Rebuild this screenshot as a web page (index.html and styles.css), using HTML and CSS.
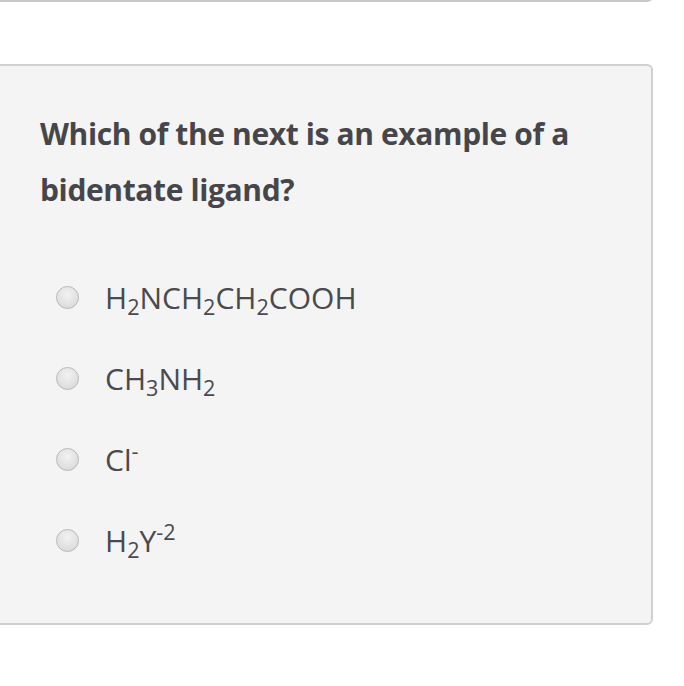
FILE: index.html
```html
<!DOCTYPE html>
<html>
<head>
<meta charset="utf-8">
<link rel="stylesheet" href="styles.css">
</head>
<body>
<div class="prev-card"></div>
<div class="card">
  <p class="question">Which of the next is an example of a bidentate ligand?</p>
  <ul class="options">
    <li class="option"><span class="radio"></span><span class="label">H<sub>2</sub>NCH<sub>2</sub>CH<sub>2</sub>COOH</span></li>
    <li class="option"><span class="radio"></span><span class="label">CH<sub>3</sub>NH<sub>2</sub></span></li>
    <li class="option"><span class="radio"></span><span class="label">Cl<sup class="minus">-</sup></span></li>
    <li class="option"><span class="radio"></span><span class="label">H<sub>2</sub>Y<sup>-2</sup></span></li>
  </ul>
</div>
</body>
</html>
```
FILE: styles.css
```css
html, body {
  margin: 0;
  padding: 0;
  background: #ffffff;
  width: 684px;
  height: 686px;
  overflow: hidden;
}
body {
  font-family: "Open Sans", "Liberation Sans", sans-serif;
  color: #4a4a4e;
}
.prev-card {
  margin-left: -20px;
  width: 673px;
  height: 40px;
  margin-top: -38px;
  border: 2px solid #c8c8c8;
  border-top: none;
  border-radius: 0 0 6px 6px;
  background: #f4f4f4;
  box-sizing: border-box;
}
.card {
  margin-top: 62px;
  margin-left: -20px;
  width: 673px;
  height: 561px;
  box-sizing: border-box;
  border: 2px solid #d0d0d0;
  border-radius: 6px;
  background: #f4f4f4;
  padding: 40px 40px 0 58px;
}
.question {
  margin: 0;
  font-weight: 700;
  font-size: 30px;
  line-height: 56px;
  letter-spacing: -0.38px;
  color: #46464a;
}
.options {
  list-style: none;
  margin: 61px 0 0 0;
  padding: 0;
}
.option {
  display: flex;
  align-items: center;
  height: 81px;
  margin-top: -22px;
}
.option + .option { margin-top: 0; }
.radio {
  width: 23px;
  height: 23px;
  margin-left: 16px;
  border-radius: 50%;
  box-sizing: border-box;
  border: 1px solid #b8b8b8;
  background: radial-gradient(circle at 50% 35%, #f2f2f2 0%, #dedede 70%, #d2d2d2 100%);
  flex: none;
}
.label {
  margin-left: 26px;
  font-size: 30px;
  color: #4a4a4e;
}
sub {
  font-size: 0.72em;
  vertical-align: -0.28em;
  line-height: 0;
}
sup {
  font-size: 0.72em;
  vertical-align: 0.55em;
  line-height: 0;
}
```
